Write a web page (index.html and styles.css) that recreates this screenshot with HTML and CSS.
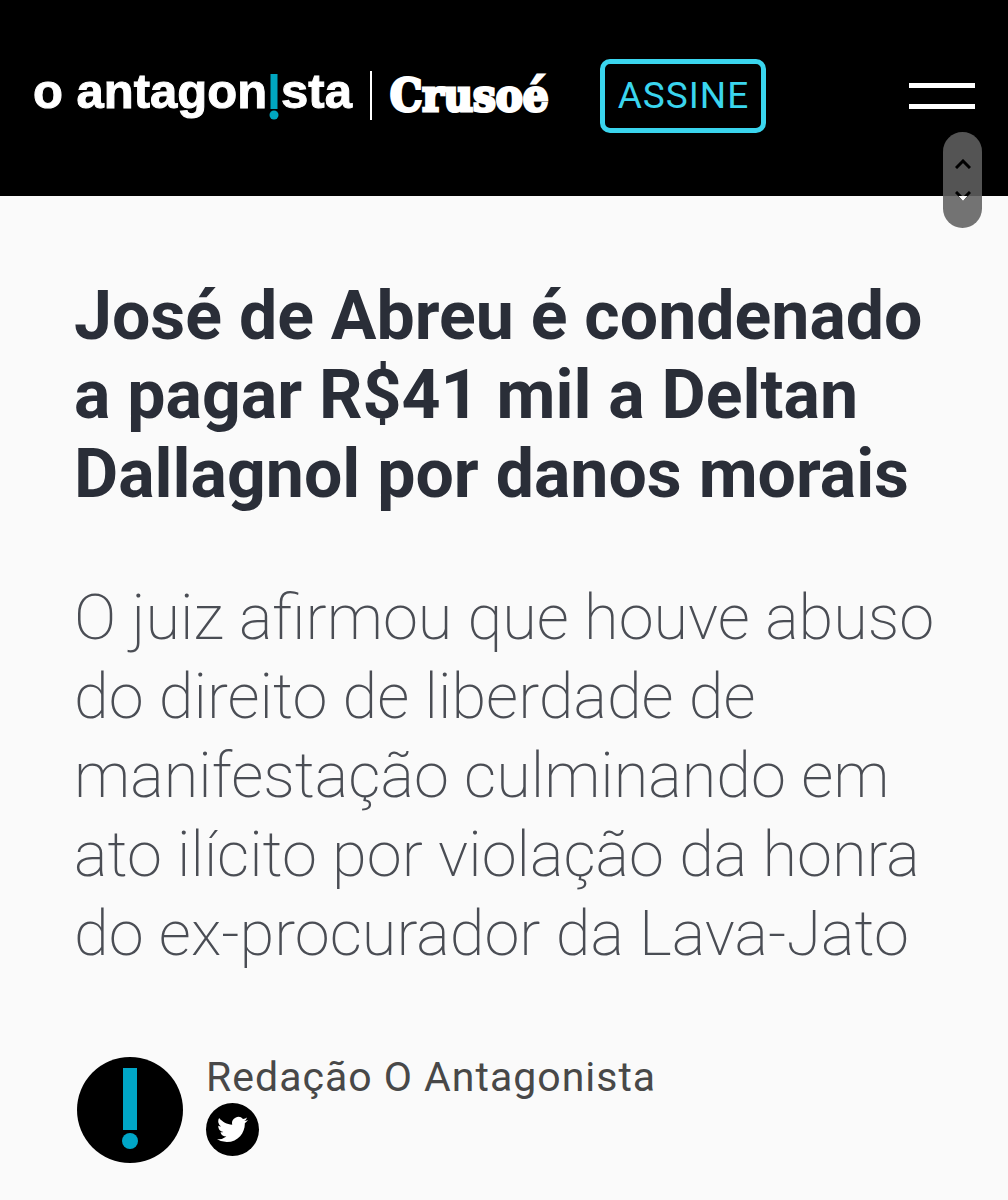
FILE: index.html
```html
<!DOCTYPE html>
<html lang="pt-BR">
<head>
  <meta charset="UTF-8" />
  <meta name="viewport" content="width=device-width, initial-scale=1.0" />
  <title>José de Abreu é condenado - O Antagonista</title>
  <link rel="stylesheet" href="styles.css">
</head>
<body>

<!-- Header -->
<header class="header">
  <div class="brands">
    <a href="#" class="logo">o antagon<svg class="mark" viewBox="0 0 10 46" aria-hidden="true"><path d="M1.5 0h7v35h-7z"/><circle cx="5" cy="41" r="4.5"/></svg>sta</a>
    <a href="#" class="crusoe">Crusoé</a>
  </div>
  <button class="subscribe">ASSINE</button>
  <button class="menu" aria-label="Menu"><span></span><span></span></button>
</header>

<!-- Scroll buttons -->
<div class="scroller">
  <button aria-label="Subir"><svg viewBox="0 0 16 10"><path d="M1 9l7-7 7 7" stroke="#000"/></svg></button>
  <button aria-label="Descer"><svg viewBox="0 0 16 10"><path d="M1 1l7 7 7-7" stroke="#000"/><path d="M3.5 5h9L8 10z" fill="#fff"/></svg></button>
</div>

<!-- Article -->
<main class="article">
  <h1>José de Abreu é condenado a pagar R$41 mil a Deltan Dallagnol por danos morais</h1>
  <p class="summary">O juiz afirmou que houve abuso do direito de liberdade de manifestação culminando em ato ilícito por violação da honra do ex-procurador da Lava-Jato</p>

  <div class="author">
    <svg class="avatar" viewBox="0 0 106 106" aria-hidden="true">
      <circle cx="53" cy="53" r="53"/>
      <path fill="#00a6c7" d="M46 11h14v62H46z"/>
      <circle fill="#00a6c7" cx="53" cy="84" r="8"/>
    </svg>
    <div class="author-info">
      <span class="author-name">Redação O Antagonista</span>
      <a href="#" class="twitter" aria-label="Twitter">
        <svg viewBox="0 0 24 24"><path d="M23.95 4.57a10 10 0 0 1-2.82.77 4.96 4.96 0 0 0 2.16-2.72 9.9 9.9 0 0 1-3.12 1.18 4.92 4.92 0 0 0-8.38 4.48C7.69 8.1 4.07 6.13 1.64 3.16a4.92 4.92 0 0 0 1.52 6.57 4.9 4.9 0 0 1-2.23-.61v.06a4.92 4.92 0 0 0 3.95 4.83 5 5 0 0 1-2.21.08 4.94 4.94 0 0 0 4.6 3.42A9.87 9.87 0 0 1 0 19.54a14 14 0 0 0 7.55 2.21c9.05 0 14-7.5 14-13.98 0-.21 0-.42-.02-.63a9.94 9.94 0 0 0 2.46-2.55z"/></svg>
      </a>
    </div>
  </div>
</main>

</body>
</html>
```
FILE: styles.css
```css
* { margin: 0; padding: 0; box-sizing: border-box; }
body {
  font-family: Roboto, sans-serif;
  background: #fafafa;
  color: #2a2e38;
}

a {
  color: inherit;
  text-decoration: none;
}

button {
  background: none;
  border: none;
  font-family: inherit;
  cursor: pointer;
}

.header {
  display: flex;
  align-items: center;
  height: 196px;
  padding: 0 33px 5px;
  background: #000;
  color: #fff;
}

.brands {
  display: flex;
  align-items: center;
}

.logo {
  padding-right: 18px;
  border-right: 2px solid #fff;
  font: bold 49px/40px "Liberation Sans", sans-serif;
  -webkit-text-stroke: 1px #fff;
  white-space: nowrap;
}

.mark {
  width: 10px;
  height: 46px;
  margin: 0 2px;
  vertical-align: -12px;
  fill: #00a6c0;
}

.crusoe {
  padding-left: 18px;
  font: bold 45px/46px "DejaVu Serif Condensed", "DejaVu Serif", serif;
  -webkit-text-stroke: 3px #fff;
}

.subscribe {
  width: 166px;
  height: 74px;
  margin-left: 52px;
  border: 5px solid #3ad5ee;
  border-radius: 10px;
  color: #3ad5ee;
  font-size: 37px;
  letter-spacing: 1px;
}

.menu {
  display: flex;
  flex-direction: column;
  gap: 16px;
  margin-left: auto;
}

.menu span {
  width: 66px;
  height: 5px;
  background: #fff;
}

.scroller {
  position: fixed;
  top: 132px;
  right: 26px;
  display: flex;
  flex-direction: column;
  justify-content: center;
  gap: 22px;
  width: 39px;
  height: 96px;
  border-radius: 20px;
  background: rgba(96, 96, 96, 0.88);
}

.scroller button {
  display: flex;
  justify-content: center;
}

.scroller svg {
  width: 16px;
  height: 10px;
  fill: none;
  stroke-width: 3;
}

.article {
  padding: 81px 60px 36px 74px;
}

h1 {
  font-size: 68px;
  line-height: 79px;
  font-weight: 700;
}

.summary {
  margin-top: 64px;
  font-size: 63px;
  line-height: 79px;
  font-weight: 200;
  color: #4a4d54;
}

.author {
  display: flex;
  gap: 23px;
  margin-top: 84px;
}

.avatar {
  width: 106px;
  height: 106px;
  margin-left: 3px;
}

.author-name {
  display: block;
  color: #484848;
  font-size: 41px;
  line-height: 40px;
  letter-spacing: 1px;
}

.twitter {
  display: flex;
  align-items: center;
  justify-content: center;
  width: 53px;
  height: 53px;
  margin-top: 6px;
  border-radius: 50%;
  background: #000;
}

.twitter svg {
  width: 31px;
  height: 31px;
  fill: #fff;
}
```
